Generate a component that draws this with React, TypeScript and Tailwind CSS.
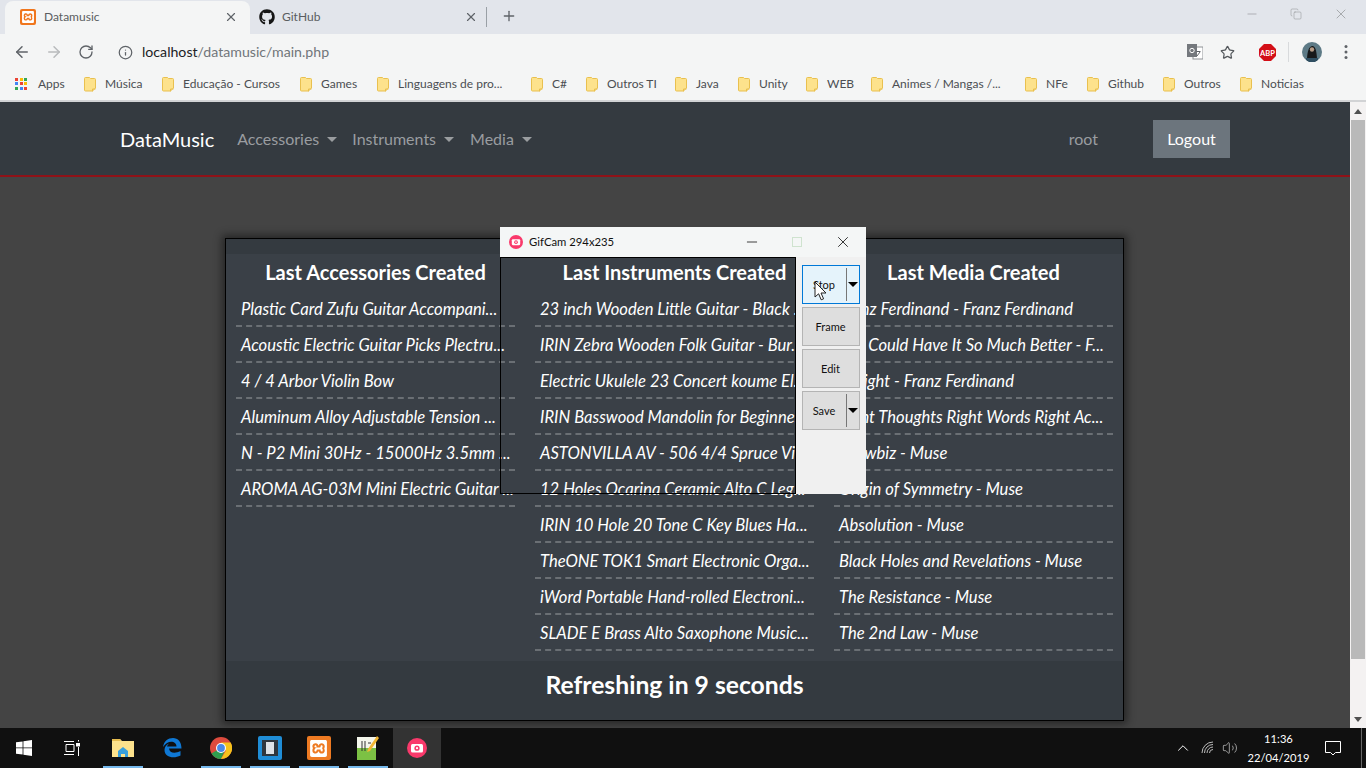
import { ArrowLeft, ArrowRight, RotateCw, Info, Star, X, Plus, Minus, Copy, Volume2, ChevronUp } from "lucide-react";
import { FaGithub } from "react-icons/fa";
import { SiXampp } from "react-icons/si";

const BOOKMARKS = [
  { label: "Música", cls: "w-[78px]" },
  { label: "Educação - Cursos", cls: "w-[138px]" },
  { label: "Games", cls: "w-[77px]" },
  { label: "Linguagens de pro...", cls: "w-[154px]" },
  { label: "C#", cls: "w-[55px]" },
  { label: "Outros TI", cls: "w-[89px]" },
  { label: "Java", cls: "w-[63px]" },
  { label: "Unity", cls: "w-[68px]" },
  { label: "WEB", cls: "w-[65px]" },
  { label: "Animes / Mangas /...", cls: "w-[154px]" },
  { label: "NFe", cls: "w-[62px]" },
  { label: "Github", cls: "w-[76px]" },
  { label: "Outros", cls: "w-[77px]" },
  { label: "Noticias", cls: "w-[70px]" },
];

const ACCESSORIES = [
  "Plastic Card Zufu Guitar Accompani...",
  "Acoustic Electric Guitar Picks Plectru...",
  "4 / 4 Arbor Violin Bow",
  "Aluminum Alloy Adjustable Tension ...",
  "N - P2 Mini 30Hz - 15000Hz 3.5mm ...",
  "AROMA AG-03M Mini Electric Guitar ...",
];

const INSTRUMENTS = [
  "23 inch Wooden Little Guitar - Black ...",
  "IRIN Zebra Wooden Folk Guitar - Bur...",
  "Electric Ukulele 23 Concert koume El...",
  "IRIN Basswood Mandolin for Beginne...",
  "ASTONVILLA AV - 506 4/4 Spruce Vi...",
  "12 Holes Ocarina Ceramic Alto C Leg...",
  "IRIN 10 Hole 20 Tone C Key Blues Ha...",
  "TheONE TOK1 Smart Electronic Orga...",
  "iWord Portable Hand-rolled Electroni...",
  "SLADE E Brass Alto Saxophone Music...",
];

const MEDIA = [
  "Franz Ferdinand - Franz Ferdinand",
  "You Could Have It So Much Better - F...",
  "Tonight - Franz Ferdinand",
  "Right Thoughts Right Words Right Ac...",
  "Showbiz - Muse",
  "Origin of Symmetry - Muse",
  "Absolution - Muse",
  "Black Holes and Revelations - Muse",
  "The Resistance - Muse",
  "The 2nd Law - Muse",
];

function Folder() {
  return (
    <svg width="12" height="15" viewBox="0 0 12 15" className="shrink-0">
      <path d="M.5 1.5a1 1 0 0 1 1-1h4l1 1h4a1 1 0 0 1 1 1v8.500l-3 3h-7a1 1 0 0 1-1-1z" fill="#fde28c" stroke="#e9c04f" />
      <path d="M8.500 14.500v-2.500h3" fill="none" stroke="#e9c04f" />
    </svg>
  );
}

function AppsGrid() {
  const colors = ["#ea4335", "#fbbc05", "#34a853", "#4285f4", "#ea4335", "#fbbc05", "#34a853", "#4285f4", "#ea4335"];
  return (
    <div className="grid grid-cols-3 gap-[1px] w-[13px] h-[13px]">
      {colors.map((c, i) => (
        <svg key={i} width="3" height="3"><rect width="3" height="3" fill={c} /></svg>
      ))}
    </div>
  );
}

function GifCamIcon({ size }: { size: number }) {
  return (
    <svg width={size} height={size} viewBox="0 0 20 20">
      <circle cx="10" cy="10" r="10" fill="#f9396b" />
      <rect x="4" y="6" width="12" height="8.5" rx="1.5" fill="#fff" />
      <circle cx="10" cy="10.2" r="2.6" fill="#f9396b" />
      <circle cx="10" cy="10.2" r="1.1" fill="#fff" />
    </svg>
  );
}

function TabBar() {
  return (
    <div className="h-[34px] bg-[#e2e5eb] flex items-end pl-[5px]">
      <div className="w-[245px] h-[33px] bg-[#f4f5f5] rounded-t-lg flex items-center pl-[15px] pr-[12px] pb-[1px]">
        <div className="w-4 h-4 bg-[#f0761d] rounded-[2px] flex items-center justify-center">
          <SiXampp className="w-3 h-3 text-white" />
        </div>
        <span className="ml-[8px] flex-1 text-[12px] text-[#5a5d60]">Datamusic</span>
        <X className="w-[14px] h-[14px] text-[#5f6368]" strokeWidth={2} />
      </div>
      <div className="w-[236px] h-[33px] flex items-center pl-[9px] pr-[8px] pb-[1px]">
        <FaGithub className="w-4 h-4 text-[#161616]" />
        <span className="ml-[7px] flex-1 text-[12px] text-[#5a5d60]">GitHub</span>
        <X className="w-[14px] h-[14px] text-[#5f6368]" strokeWidth={2} />
      </div>
      <div className="w-px h-[20px] bg-[#9aa0a6] mb-[7px]" />
      <Plus className="w-[16px] h-[16px] text-[#5f6368] ml-[14px] mb-[10px]" strokeWidth={2} />
      <div className="flex-1" />
      <div className="flex items-center self-start h-[28px] text-[#8a8c8e]">
        <Minus className="w-[14px] h-[14px] mr-[31px]" strokeWidth={1} />
        <Copy className="w-[12px] h-[12px] mr-[31px]" strokeWidth={1} />
        <X className="w-[16px] h-[16px] mr-[17px]" strokeWidth={1} />
      </div>
    </div>
  );
}

function Toolbar() {
  return (
    <div className="h-[34px] pt-[2px] bg-[#f4f5f5] flex items-center text-[#5f6368]">
      <ArrowLeft className="w-[18px] h-[18px] ml-[13px]" strokeWidth={2} />
      <ArrowRight className="w-[18px] h-[18px] ml-[14px] text-[#b8babc]" strokeWidth={2} />
      <RotateCw className="w-[16px] h-[16px] ml-[15px]" strokeWidth={2} />
      <Info className="w-[15px] h-[15px] ml-[24px]" strokeWidth={2} />
      <span className="ml-[9px] text-[14.15px] text-[#202124]">
        localhost<span className="text-[#70757a]">/datamusic/main.php</span>
      </span>
      <div className="flex-1" />
      <svg width="16" height="16" viewBox="0 0 16 16">
        <rect x="6" y="3" width="10" height="12" fill="#fff" stroke="#8d9195" />
        <rect x="0" y="0" width="10" height="13" fill="#74787d" />
        <circle cx="5" cy="6.500" r="2.200" fill="none" stroke="#fff" />
        <path d="M9.500 7.500h4M11.500 7v1M10 12l3-4" stroke="#5f6368" fill="none" />
      </svg>
      <Star className="w-[15px] h-[15px] ml-[17px] text-[#54585c]" strokeWidth={2} />
      <svg width="17" height="17" viewBox="0 0 17 17" className="ml-[24px]">
        <path d="M5 0h7l5 5v7l-5 5H5l-5-5V5z" fill="#d30f17" />
        <text x="8.5" y="11.5" textAnchor="middle" fontSize="7.5" fontWeight="700" fill="#fff">ABP</text>
      </svg>
      <div className="w-px h-[20px] bg-[#d8dadc] ml-[12px]" />
      <svg width="20" height="20" viewBox="0 0 20 20" className="ml-[13px]">
        <circle cx="10" cy="10" r="10" fill="#5d7a86" />
        <path d="M5 19c0-7 1-14 5-15s5 8 5 15z" fill="#17191b" />
        <circle cx="10" cy="7.500" r="2.200" fill="#b49a85" />
        <path d="M4 16h12v2l-3 2H7l-3-2z" fill="#2f4f62" />
      </svg>
      <svg width="4" height="16" viewBox="0 0 4 16" className="ml-[22px] mr-[18px]">
        <circle cx="2" cy="2.5" r="1.5" fill="#5f6368" />
        <circle cx="2" cy="8" r="1.5" fill="#5f6368" />
        <circle cx="2" cy="13.5" r="1.5" fill="#5f6368" />
      </svg>
    </div>
  );
}

function BookmarkBar() {
  return (
    <div className="h-[34px] bg-[#f4f5f5] border-b-2 border-[#d2d3d5] flex items-center pl-[15px] text-[12px] text-[#4b4e52]">
      <AppsGrid />
      <span className="ml-[10px] w-[46px]">Apps</span>
      {BOOKMARKS.map((b) => (
        <div key={b.label} className={`flex items-center gap-[9px] shrink-0 ${b.cls}`}>
          <Folder />
          <span className="whitespace-nowrap">{b.label}</span>
        </div>
      ))}
    </div>
  );
}

function Caret() {
  return <span className="inline-block ml-[8px] align-[3px] border-x-[5px] border-x-transparent border-t-[5px] border-t-[#9a9da0]" />;
}

function Navbar() {
  return (
    <div className="h-[75px] bg-[#343a40] border-b-2 border-[#8f1218] flex items-center pl-[120px] pr-[120px] text-[16px] text-[#9a9da0]">
      <span className="text-[20px] text-white mr-[23px]">DataMusic</span>
      <span className="mr-[15px]">Accessories<Caret /></span>
      <span className="mr-[16px]">Instruments<Caret /></span>
      <span>Media<Caret /></span>
      <div className="flex-1" />
      <span className="mr-[55px]">root</span>
      <button className="w-[77px] h-[38px] bg-[#6c757d] text-white">Logout</button>
    </div>
  );
}

function ListColumn({ title, items }: { title: string; items: string[] }) {
  return (
    <div className="px-[10px]">
      <h5 className="h-[37px] text-[20px] leading-[36px] font-bold text-white text-center">{title}</h5>
      {items.map((t) => (
        <div key={t} className="h-[36px] border-b-2 border-dashed border-[#6a6f74] pl-[5px] text-[16.6px] leading-[36px] italic text-white whitespace-nowrap">
          {t}
        </div>
      ))}
    </div>
  );
}

function ContentCard() {
  return (
    <div className="mt-[61px] ml-[225px] w-[899px] h-[483px] border border-black bg-[#3a4047] shadow-[0_0_8px_3px_rgba(0,0,0,0.45)] flex flex-col">
      <div className="h-[15px] bg-[#343a40]" />
      <div className="flex-1 grid grid-cols-3 gap-0">
        <ListColumn title="Last Accessories Created" items={ACCESSORIES} />
        <ListColumn title="Last Instruments Created" items={INSTRUMENTS} />
        <ListColumn title="Last Media Created" items={MEDIA} />
      </div>
      <div className="h-[59px] bg-[#343a40] text-center text-[24.7px] leading-[48px] font-bold text-white">
        Refreshing in 9 seconds
      </div>
    </div>
  );
}

function Scrollbar() {
  return (
    <div className="w-[16px] bg-[#f4f2f2] flex flex-col items-center">
      <div className="h-[18px] flex items-center justify-center">
        <span className="border-x-[4px] border-x-transparent border-b-[5px] border-b-[#505050]" />
      </div>
      <div className="w-[14px] h-[539px] bg-[#b9b9b9]" />
      <div className="flex-1" />
      <div className="h-[18px] flex items-center justify-center">
        <span className="border-x-[4px] border-x-transparent border-t-[5px] border-t-[#505050]" />
      </div>
    </div>
  );
}

function GifButton({ label, arrow, active }: { label: string; arrow?: boolean; active?: boolean }) {
  return (
    <div className={`w-[58px] h-[39px] border flex items-center text-[11px] text-[#111] ${active ? "border-[#0078d7] bg-[#e5f3fb]" : "border-[#b4b4b4] bg-[#dedede]"}`}>
      <span className="flex-1 text-center pt-[2px] pr-[1px]">{label}</span>
      {arrow && (
        <>
          <div className="w-px h-[33px] bg-[#777]" />
          <span className="mx-px border-x-[5px] border-x-transparent border-t-[5px] border-t-black" />
        </>
      )}
    </div>
  );
}

function GifCamWindow() {
  return (
    <div className="absolute left-[500px] top-[227px] w-[366px] h-[267px] flex flex-col">
      <div className="h-[30px] bg-[#f4f6f6] flex items-center pl-[9px] text-[11.3px] text-[#111]">
        <GifCamIcon size={14} />
        <span className="ml-[6px] flex-1">GifCam 294x235</span>
        <Minus className="w-[16px] h-[16px] text-[#111] mr-[32px]" strokeWidth={1.2} />
        <div className="w-[10px] h-[10px] border border-[#cfe3cf] mr-[32px]" />
        <X className="w-[18px] h-[18px] text-[#111] mr-[14px]" strokeWidth={1.1} />
      </div>
      <div className="flex-1 flex">
        <div className="flex-1 border border-black" />
        <div className="w-[70px] bg-[#f0f0f0] pl-[6px] pt-[8px] flex flex-col gap-[3px] relative">
          <GifButton label="Stop" arrow active />
          <GifButton label="Frame" />
          <GifButton label="Edit" />
          <GifButton label="Save" arrow />
          <svg width="13" height="20" viewBox="0 0 13 20" className="absolute left-[18px] top-[24px]">
            <path d="M1 1v15l3.6-3.2 2.6 6 2.4-1-2.6-5.8H12z" fill="#fff" stroke="#222" strokeWidth="1" />
          </svg>
        </div>
      </div>
    </div>
  );
}

function Taskbar() {
  const underline = "absolute bottom-0 left-[5px] right-[4px] h-[2px] bg-[#76b9ed]";
  return (
    <div className="h-[40px] bg-[#101010] flex items-stretch text-white">
      <div className="w-[48px] flex items-center justify-center">
        <svg width="16" height="16" viewBox="0 0 16 16">
          <path d="M0 2.3 6.6 1.4v6.1H0zM7.4 1.3 16 0v7.5H7.4zM0 8.3h6.6v6.3L0 13.7zM7.4 8.3H16V16l-8.6-1.2z" fill="#fff" />
        </svg>
      </div>
      <div className="w-[48px] flex items-center justify-center">
        <svg width="16" height="16" viewBox="0 0 16 16" fill="none" stroke="#fff">
          <path d="M0 1.5h10M0 14.5h10M2 4.5h8v7H2zM14.5 0v1.5M14.5 7v9" />
          <rect x="12.5" y="3.5" width="3" height="2.5" fill="#fff" />
        </svg>
      </div>
      <div className="w-[2px]" />
      <div className="w-[49px] relative flex items-center justify-center">
        <svg width="22" height="20" viewBox="0 0 22 20">
          <path d="M0 1h8l2 2h12v16H0z" fill="#fde28c" />
          <path d="M0 1h8l1 2H0z" fill="#e6bc4f" />
          <path d="M6 19v-6l5-4 5 4v6h-3v-3H9v3z" fill="#3aa0dc" />
        </svg>
        <div className={underline} />
      </div>
      <div className="w-[49px] flex items-center justify-center">
        <svg width="20" height="20" viewBox="0 0 20 20">
          <path d="M1 9C2 3 6 0 11 0c5 0 8.500 4 8.500 10.500H7c.3 4.500 6 5.500 11.500 2.500v4.500C12 21 2.500 19.500 2.500 12c0-3 2-5.500 4.500-6.500-1 1-1.800 2-2 3h9.500C14.500 3 6 1 1 9z" fill="#0f78d4" />
        </svg>
      </div>
      <div className="w-[49px] relative flex items-center justify-center">
        <svg width="22" height="22" viewBox="0 0 22 22">
          <circle cx="11" cy="11" r="11" fill="#dd4b3e" />
          <path d="M11 11 1.500 16.500A11 11 0 0 0 11 22l5-11z" fill="#2f9e4f" />
          <path d="M11 5.500h9.600A11 11 0 0 1 11 22l4.800-8.300z" fill="#f6c21c" />
          <circle cx="11" cy="11" r="5" fill="#fff" />
          <circle cx="11" cy="11" r="3.900" fill="#4a89e8" />
        </svg>
        <div className={underline} />
      </div>
      <div className="w-[49px] relative flex items-center justify-center">
        <div className="w-[24px] h-[24px] bg-[#1f8dd6] rounded-[2px] flex items-center justify-center">
          <div className="w-[16px] h-[16px] bg-[#30373d] flex items-center justify-center">
            <div className="w-[8px] h-[12px] bg-[#dfe3e6]" />
          </div>
        </div>
        <div className={underline} />
      </div>
      <div className="w-[49px] relative flex items-center justify-center">
        <div className="w-[24px] h-[24px] bg-[#ee7a22] rounded-[2px] flex items-center justify-center">
          <SiXampp className="w-[17px] h-[17px] text-white" />
        </div>
        <div className={underline} />
      </div>
      <div className="w-[49px] relative flex items-center justify-center">
        <svg width="22" height="24" viewBox="0 0 22 24">
          <rect x="0" y="1" width="19" height="23" fill="#f4f6ec" />
          <rect x="0" y="12" width="19" height="12" fill="#7cc144" />
          <path d="M5 5v10M8 5v10M11 7h3" stroke="#333" />
          <path d="M20 0 22 2 13 15 10 16 11 13z" fill="#f2b632" />
        </svg>
        <div className={underline} />
      </div>
      <div className="w-px" />
      <div className="w-[48px] bg-[#333333] flex items-center justify-center">
        <GifCamIcon size={20} />
      </div>
      <div className="flex-1" />
      <div className="flex items-center">
        <ChevronUp className="w-[18px] h-[18px]" strokeWidth={1.3} />
        <svg width="14" height="14" viewBox="0 0 14 14" fill="none" stroke="#bbb" className="ml-[9px]">
          <path d="M1 12a11 11 0 0 1 11-11M3.500 12A8.500 8.500 0 0 1 12 3.500M6 12a6 6 0 0 1 6-6M8.500 12A3.500 3.500 0 0 1 12 8.500" />
        </svg>
        <Volume2 className="w-[16px] h-[16px] ml-[7px] text-[#ddd]" strokeWidth={1} />
      </div>
      <div className="w-[80px] pl-[1px] pb-[1px] flex flex-col items-center justify-center text-[11.2px] leading-[19px]">
        <span>11:36</span>
        <span>22/04/2019</span>
      </div>
      <div className="flex items-center ml-[7px]">
        <svg width="16" height="16" viewBox="0 0 16 16" fill="none" stroke="#fff">
          <path d="M.5 1.500h15v11h-5L8 15l-2.500-2.500h-5z" />
        </svg>
      </div>
      <div className="w-[20px]" />
      <div className="w-px bg-[#666] mr-[4px]" />
    </div>
  );
}

export default function App() {
  return (
    <div className="relative w-[1366px] h-[768px] overflow-hidden flex flex-col font-['Lato',sans-serif]">
      <TabBar />
      <Toolbar />
      <BookmarkBar />
      <div className="flex-1 flex min-h-0">
        <div className="flex-1 bg-[#444444] min-w-0">
          <Navbar />
          <ContentCard />
        </div>
        <Scrollbar />
      </div>
      <Taskbar />
      <GifCamWindow />
    </div>
  );
}
